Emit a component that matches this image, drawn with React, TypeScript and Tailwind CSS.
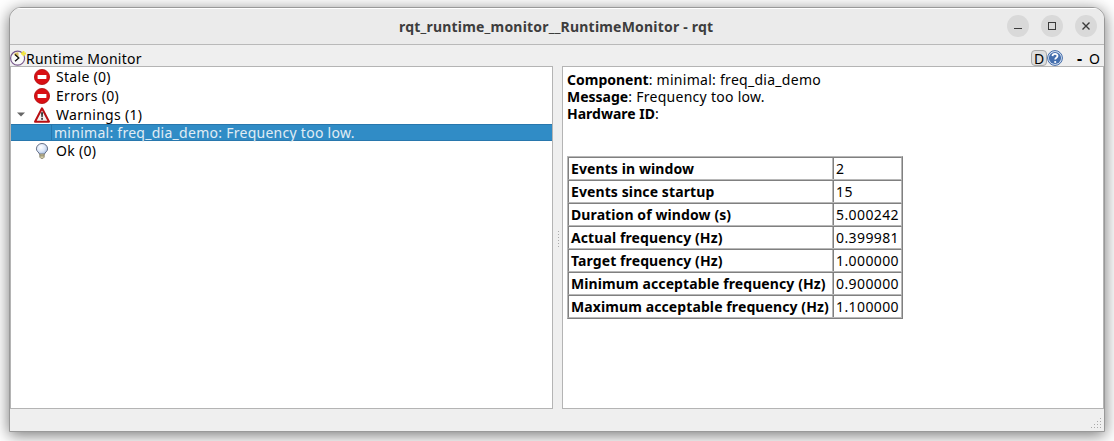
import React from "react";

const font = "font-['Noto_Sans','Open_Sans',sans-serif]";

function StopIcon() {
  return (
    <svg className="size-4 shrink-0" viewBox="0 0 16 16">
      <circle cx="8" cy="8" r="7.6" fill="#d80f14" stroke="#b00a0a" strokeWidth=".8" />
      <rect x="3.6" y="6.1" width="8.8" height="3.8" rx=".4" fill="#fff" />
    </svg>
  );
}

function WarningIcon() {
  return (
    <svg className="size-4 shrink-0" viewBox="0 0 16 16">
      <path d="M8 1.3 15 14.7H1Z" fill="#f1f1f1" stroke="#b80f13" strokeWidth="2" strokeLinejoin="round" />
      <path d="M7 5.2h2.1l-.4 5H7.4Z" fill="#333" />
      <rect x="7.1" y="10.9" width="1.9" height="1.8" rx=".5" fill="#333" />
    </svg>
  );
}

function BulbIcon() {
  return (
    <svg className="size-4 shrink-0" viewBox="0 0 16 16">
      <defs>
        <radialGradient id="bulb" cx=".4" cy=".35" r=".7">
          <stop offset="0" stopColor="#fff" />
          <stop offset=".55" stopColor="#dbe6f8" />
          <stop offset="1" stopColor="#9db6dc" />
        </radialGradient>
      </defs>
      <path d="M8 .5a5.5 5.5 0 0 0-5.6 5.4c0 2.6 2.9 3.5 3.2 5.4h4.8c.3-1.9 3.2-2.8 3.2-5.4A5.5 5.5 0 0 0 8 .5Z" fill="url(#bulb)" stroke="#59627a" strokeWidth=".9" />
      <path d="M5.8 11.1h4.4v3.1L8.8 15.6H7.2L5.8 14.2Z" fill="#d3cba4" stroke="#77725c" strokeWidth=".7" />
      <path d="M5.8 12.8h4.4" stroke="#77725c" strokeWidth=".7" />
    </svg>
  );
}

function MonitorIcon() {
  return (
    <svg className="size-4 shrink-0" viewBox="0 0 16 16">
      <circle cx="7.6" cy="8.2" r="7" fill="#fafafa" stroke="#77588c" strokeWidth="1.2" />
      <path d="M8.5 8V2.4A6 6 0 0 0 3.6 4.2Z" fill="#d8bd65" />
      <path d="M5 4.6 8.8 7.9 5 11.2" fill="none" stroke="#111" strokeWidth="1.3" />
      <path d="M13.5 1v5M11 3.5h5" stroke="#f2e63c" strokeWidth="1.8" />
    </svg>
  );
}

function HelpIcon() {
  return (
    <svg className="size-4 shrink-0" viewBox="0 0 16 16">
      <circle cx="8" cy="8" r="7.4" fill="#dfe8f4" stroke="#3d68a8" strokeWidth="1" />
      <circle cx="8" cy="8" r="6.1" fill="#446fae" />
      <path d="M5.5 6.1C5.6 3.2 10.6 3.3 10.5 6c-.1 1.8-2.3 1.7-2.3 3.6" fill="none" stroke="#fff" strokeWidth="1.8" />
      <circle cx="8.2" cy="12" r="1.1" fill="#fff" />
    </svg>
  );
}

function WindowButton({ children }: { children: React.ReactNode }) {
  return (
    <button className="flex size-[22px] items-center justify-center rounded-full bg-[#d9d9d9]">
      <svg className="size-[22px]" viewBox="0 0 22 22" fill="none" stroke="#3a3a3a">{children}</svg>
    </button>
  );
}

function Branch({ icon, children, open }: { icon: React.ReactNode; children: string; open?: boolean }) {
  return (
    <div className="flex h-[19px] items-center pl-[6px]">
      <span className="flex w-[17px] shrink-0">
        {open && <svg className="h-[5px] w-2" viewBox="0 0 8 5"><path d="M0 .5h8L4 4.5Z" fill="#666" /></svg>}
      </span>
      {icon}
      <span className="ml-1.5 tracking-[0.3px]">{children}</span>
    </div>
  );
}

const rows = [
  ["Events in window", "2"],
  ["Events since startup", "15"],
  ["Duration of window (s)", "5.000242"],
  ["Actual frequency (Hz)", "0.399981"],
  ["Target frequency (Hz)", "1.000000"],
  ["Minimum acceptable frequency (Hz)", "0.900000"],
  ["Maximum acceptable frequency (Hz)", "1.100000"],
];

export default function App() {
  return (
    <div className={`h-[441px] w-[1114px] overflow-hidden bg-white pl-[9px] pt-[7px] text-[14px] leading-[17px] whitespace-nowrap text-black ${font}`}>
      <div className="flex h-[425px] w-[1096px] flex-col overflow-hidden rounded-t-[12px] border border-[#999] bg-[#efefef] shadow-[0_3px_16px_rgba(0,0,0,0.55)]">
        <header className="flex h-[37px] shrink-0 items-center border-b border-[#b9b9b9] bg-[#ebebeb] pr-[7px] shadow-[inset_0_1px_0_#fff]">
          <h1 className="ml-[389px] w-[320px] text-[14px] font-bold tracking-[0.2px] text-[#3d3d3d]">rqt_runtime_monitor__RuntimeMonitor - rqt</h1>
          <div className="ml-auto flex gap-3">
            <WindowButton><path d="M7 13.5h8" /></WindowButton>
            <WindowButton><rect x="7.5" y="7.5" width="7" height="7" /></WindowButton>
            <WindowButton><path d="m7.5 7.5 7 7m0-7-7 7" strokeWidth="1.4" /></WindowButton>
          </div>
        </header>
        <div className="flex h-[21px] shrink-0 items-center pt-1">
          <MonitorIcon />
          <span className="pt-px tracking-[0.25px]">Runtime Monitor</span>
          <div className="ml-auto flex items-center">
            <span className="flex h-4 w-4 items-center justify-center rounded-sm border border-[#aaa] bg-[#dedede] pt-0.5">D</span>
            <HelpIcon />
            <span className="flex w-[25px] justify-end pt-px pr-[6px] text-[16px] font-bold">-</span>
            <span className="mr-[4px] ml-px pt-px">O</span>
          </div>
        </div>
        <main className="flex h-[343px] shrink-0">
          <section className="w-[543px] border border-[#b4b4b4] bg-white">
            <Branch icon={<StopIcon />}>Stale (0)</Branch>
            <Branch icon={<StopIcon />}>Errors (0)</Branch>
            <Branch icon={<WarningIcon />} open>Warnings (1)</Branch>
            <div className="flex h-[17px] border-y border-[#2877ad] bg-[#308cc6] pl-[40px] text-[#e0ecf4]">
              <span className="flex items-center border-l border-[#2877ad] pl-[2px] tracking-[0.27px]">minimal: freq_dia_demo: Frequency too low.</span>
            </div>
            <Branch icon={<BulbIcon />}>Ok (0)</Branch>
          </section>
          <div className="flex w-[9px] items-center justify-end pt-1 pr-[3px]">
            <svg className="h-[17px] w-px" viewBox="0 0 1 17"><path d="M.5 0v17" stroke="#aaa" strokeDasharray="1 2" /></svg>
          </div>
          <section className="w-[542px] border border-[#b4b4b4] bg-white pl-1 pt-1">
            <p className="tracking-[0.28px]"><b className="tracking-normal">Component</b>: minimal: freq_dia_demo</p>
            <p className="tracking-[0.28px]"><b className="tracking-normal">Message</b>: Frequency too low.</p>
            <p><b>Hardware ID</b>:</p>
            <div className="mt-[34px] w-[336px] border border-[#b8b8b8] border-r-[#808080] border-b-[#808080]">
              {rows.map(([k, v]) => (
                <div key={k} className="flex h-[23px] border border-[#808080] border-r-[#b8b8b8] border-b-[#b8b8b8]">
                  <b className="flex w-[264px] items-center border-r border-[#b8b8b8] pl-[2px] tracking-[0.1px]">{k}</b>
                  <span className="flex flex-1 items-center border-l border-[#808080] pl-[2px] tracking-[0.4px]">{v}</span>
                </div>
              ))}
            </div>
          </section>
        </main>
        <footer className="flex flex-1 items-end justify-end p-[2px]">
          <svg className="h-[11px] w-[11px]" viewBox="0 0 11 11" fill="#aaa">
            <path d="M9 0h1v1H9zM6 3h1v1H6zM9 3h1v1H9zM3 6h1v1H3zM6 6h1v1H6zM9 6h1v1H9zM0 9h1v1H0zM3 9h1v1H3zM6 9h1v1H6zM9 9h1v1H9z" />
          </svg>
        </footer>
      </div>
    </div>
  );
}
